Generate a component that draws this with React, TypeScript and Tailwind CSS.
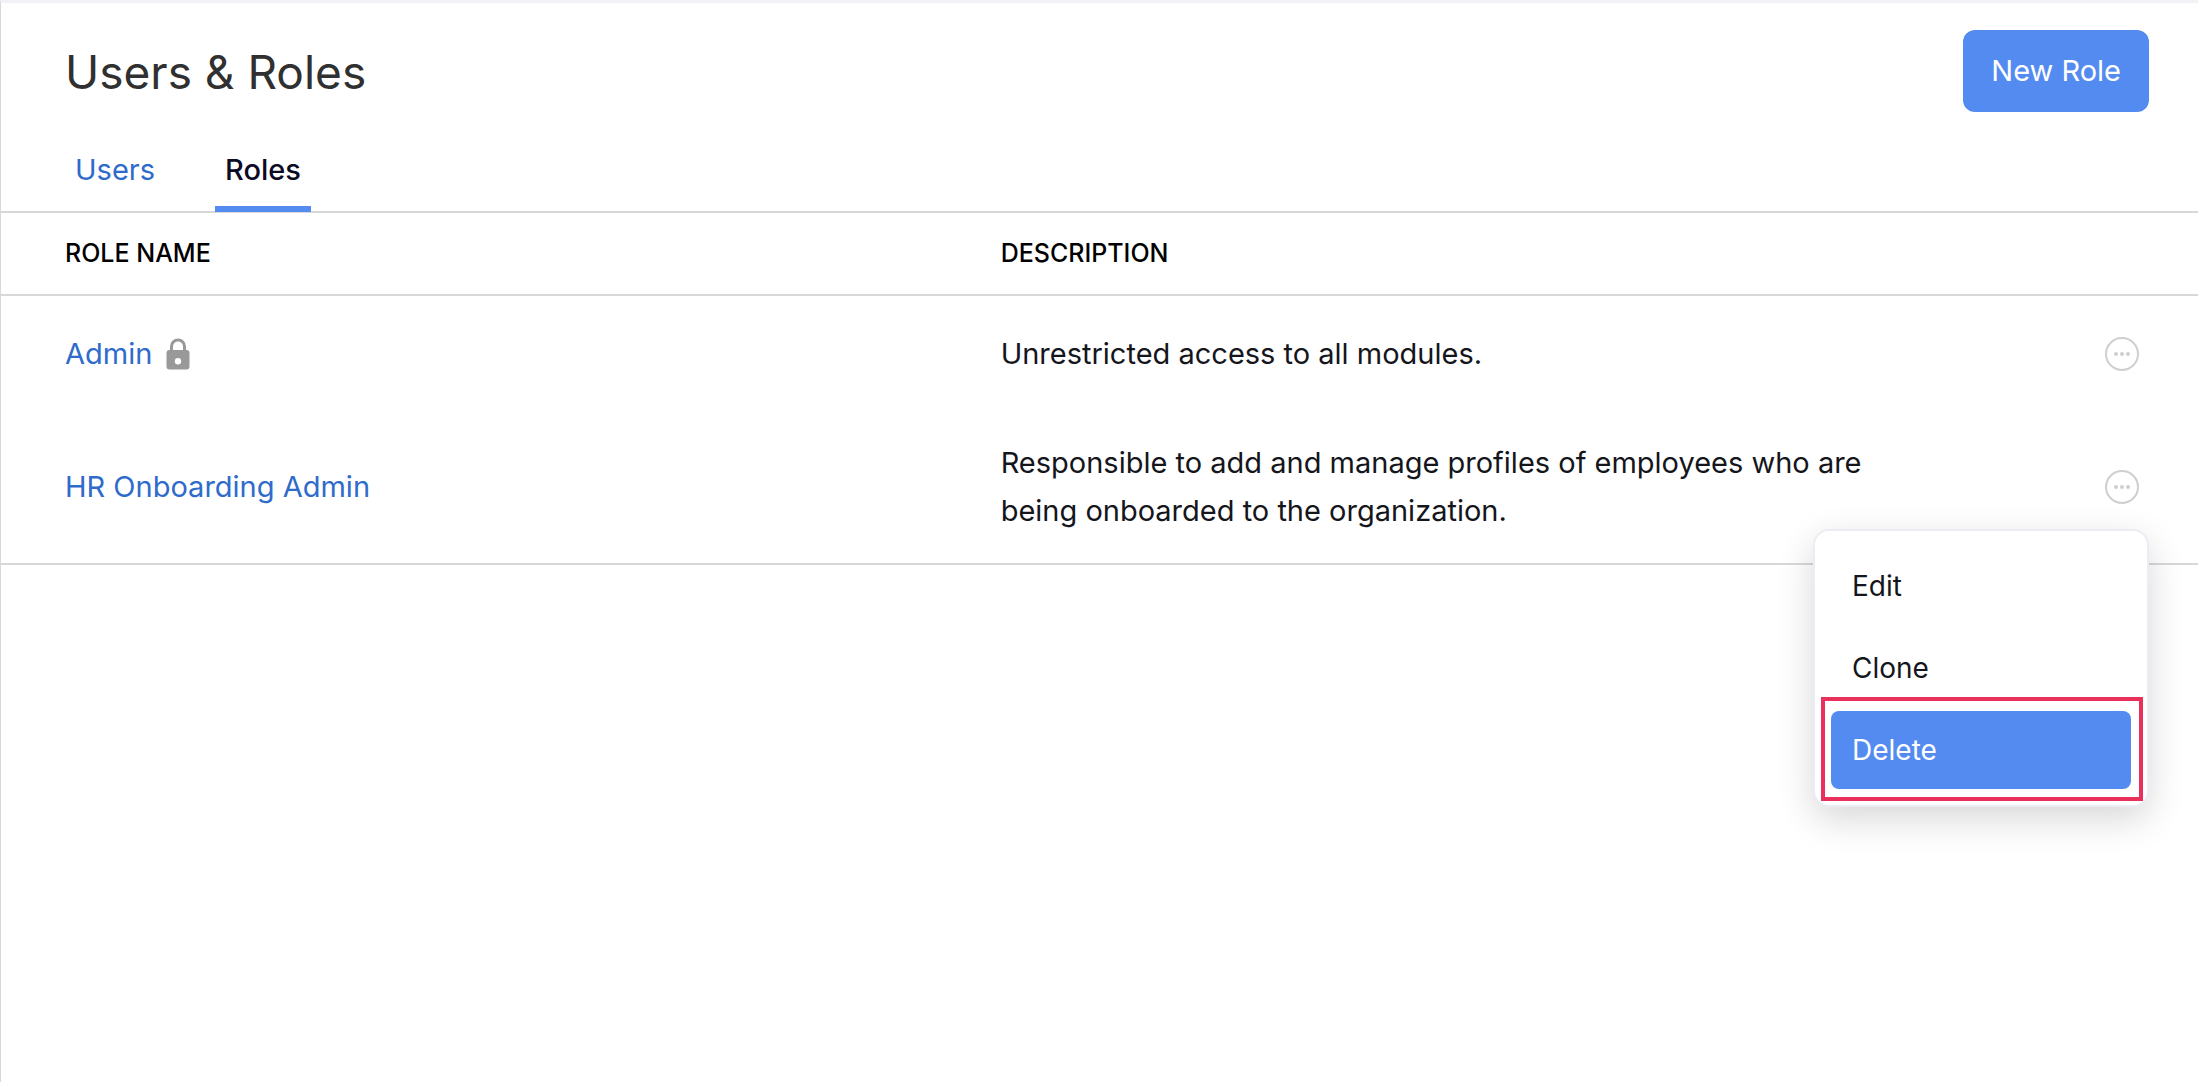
const roles = [
  {
    name: 'Admin',
    description: 'Unrestricted access to all modules.',
    locked: true,
  },
  {
    name: 'HR Onboarding Admin',
    description: 'Responsible to add and manage profiles of employees who are being onboarded to the organization.',
    menuOpen: true,
  },
]

function LockIcon() {
  return (
    <svg viewBox="0 0 24 32" className="w-6 h-8" aria-label="Locked" role="img">
      <path d="M5.500 13V8.500a6.500 6.500 0 0 1 13 0V13" fill="none" stroke="#999999" strokeWidth="3" />
      <path
        fillRule="evenodd"
        fill="#999999"
        d="M3.500 12h17a3 3 0 0 1 3 3v13.500a3 3 0 0 1-3 3h-17a3 3 0 0 1-3-3V15a3 3 0 0 1 3-3Zm8.500 8a3.200 3.200 0 1 0 0 6.400a3.200 3.200 0 1 0 0-6.400Z"
      />
    </svg>
  )
}

function MoreIcon() {
  return (
    <svg viewBox="0 0 34 34" className="w-[34px] h-[34px]" fill="#cfcfcf">
      <circle cx="17" cy="17" r="16" fill="none" stroke="#cfcfcf" strokeWidth="2" />
      <circle cx="11" cy="17" r="2" />
      <circle cx="17" cy="17" r="2" />
      <circle cx="23" cy="17" r="2" />
    </svg>
  )
}

function ActionMenu() {
  return (
    <div
      role="menu"
      className="absolute z-10 top-[59px] -right-[10px] w-[336px] p-4 flex flex-col gap-1 bg-white border-2 border-[#ececf4] rounded-2xl shadow-[0_12px_36px_rgba(0,0,0,0.16)] text-[28px]"
    >
      <button role="menuitem" className="h-[78px] px-[21px] text-left rounded-lg">Edit</button>
      <button role="menuitem" className="h-[78px] px-[21px] text-left rounded-lg">Clone</button>
      <div className="relative">
        <button role="menuitem" className="w-full h-[78px] px-[21px] text-left rounded-lg bg-[#538bf1] text-white">
          Delete
        </button>
        <div className="absolute -top-[14px] -bottom-3 -left-[10px] -right-3 border-4 border-[#e9305a] pointer-events-none" />
      </div>
    </div>
  )
}

export default function App() {
  return (
    <main className="min-h-screen bg-white border-t-[3px] border-t-[#f1f1f7] border-l border-l-[#d8d8d8] font-['Inter',sans-serif] text-[#14161c]">
      <header className="flex items-start justify-between pl-16 pr-[49px] pt-[27px]">
        <h1 className="text-[46px] leading-[84px] text-[#303030]">Users &amp; Roles</h1>
        <button className="h-[82px] px-7 rounded-xl bg-[#538bf1] text-white text-[29px]">New Role</button>
      </header>

      <nav className="flex gap-[50px] pl-16 mt-2 border-b-2 border-[#d8d8d8] text-[29px] leading-[48px]">
        <a href="#users" className="px-[10px] pt-6 pb-3 text-[#2e6bcb]">Users</a>
        <a href="#roles" aria-current="page" className="-mb-px px-[10px] pt-6 pb-3 border-b-6 border-[#538bf1] font-medium text-[#0b0b26]">
          Roles
        </a>
      </nav>

      <table className="w-full table-fixed border-separate border-spacing-0 text-left">
        <thead className="text-[25px] text-black">
          <tr>
            <th className="w-5/11 h-[83px] pl-16 font-medium border-b-2 border-[#d8d8d8]">ROLE NAME</th>
            <th className="pl-px font-medium border-b-2 border-[#d8d8d8]">DESCRIPTION</th>
            <th aria-label="Actions" className="w-[270px] border-b-2 border-[#d8d8d8]" />
          </tr>
        </thead>
        <tbody className="text-[29px] leading-[48px]">
          {roles.map((role) => (
            <tr key={role.name} className="last:*:border-b-2 *:border-[#d8d8d8]">
              <td className="h-[115px] pl-16">
                <div className="flex items-center gap-[14px]">
                  <a href="#role" className="text-[#2e6bcb]">{role.name}</a>
                  {role.locked && <LockIcon />}
                </div>
              </td>
              <td className="py-7 pl-px">{role.description}</td>
              <td className="pr-[59px]">
                <div className="relative ml-auto w-fit">
                  <button aria-label={`Actions for ${role.name}`} className="block">
                    <MoreIcon />
                  </button>
                  {role.menuOpen && <ActionMenu />}
                </div>
              </td>
            </tr>
          ))}
        </tbody>
      </table>
    </main>
  )
}
